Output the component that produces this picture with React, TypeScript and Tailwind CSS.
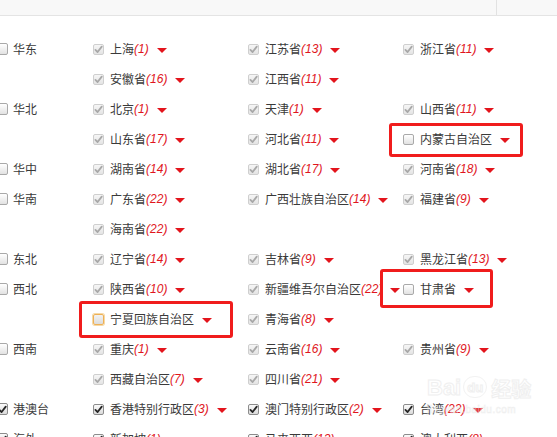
import React from "react";

type CbState = "disabled" | "checked" | "unchecked" | "focus";
type Cell = { t: string; n?: number; s?: CbState } | null;
type Row = { region?: string; rs?: CbState; cells: Cell[] };

const rows: Row[] = [
  { region: "华东", cells: [{ t: "上海", n: 1 }, { t: "江苏省", n: 13 }, { t: "浙江省", n: 11 }] },
  { cells: [{ t: "安徽省", n: 16 }, { t: "江西省", n: 11 }, null] },
  { region: "华北", cells: [{ t: "北京", n: 1 }, { t: "天津", n: 1 }, { t: "山西省", n: 11 }] },
  { cells: [{ t: "山东省", n: 17 }, { t: "河北省", n: 11 }, { t: "内蒙古自治区", s: "unchecked" }] },
  { region: "华中", cells: [{ t: "湖南省", n: 14 }, { t: "湖北省", n: 17 }, { t: "河南省", n: 18 }] },
  { region: "华南", cells: [{ t: "广东省", n: 22 }, { t: "广西壮族自治区", n: 14 }, { t: "福建省", n: 9 }] },
  { cells: [{ t: "海南省", n: 22 }, null, null] },
  { region: "东北", cells: [{ t: "辽宁省", n: 14 }, { t: "吉林省", n: 9 }, { t: "黑龙江省", n: 13 }] },
  { region: "西北", cells: [{ t: "陕西省", n: 10 }, { t: "新疆维吾尔自治区", n: 22 }, { t: "甘肃省", s: "unchecked" }] },
  { cells: [{ t: "宁夏回族自治区", s: "focus" }, { t: "青海省", n: 8 }, null] },
  { region: "西南", cells: [{ t: "重庆", n: 1 }, { t: "云南省", n: 16 }, { t: "贵州省", n: 9 }] },
  { cells: [{ t: "西藏自治区", n: 7 }, { t: "四川省", n: 21 }, null] },
  {
    region: "港澳台",
    rs: "checked",
    cells: [
      { t: "香港特别行政区", n: 3, s: "checked" },
      { t: "澳门特别行政区", n: 2, s: "checked" },
      { t: "台湾", n: 22, s: "checked" },
    ],
  },
  {
    region: "海外",
    rs: "checked",
    cells: [
      { t: "新加坡", n: 1, s: "checked" },
      { t: "马来西亚", n: 13, s: "checked" },
      { t: "澳大利亚", n: 8, s: "checked" },
    ],
  },
];

function Check({ color }: { color: string }) {
  return (
    <svg width="9" height="9" viewBox="0 0 10 10" className="block">
      <path d="M1.6 5.4 L4 7.8 L8.6 1.8" fill="none" stroke={color} strokeWidth="2" strokeLinecap="round" strokeLinejoin="round" />
    </svg>
  );
}

function Box({ s, region }: { s: CbState; region?: boolean }) {
  const size = region ? "w-[12px] h-[12px] ml-[-4px] mr-[5px]" : "w-[11px] h-[11px] mr-[6px]";
  if (s === "disabled")
    return (
      <span className={`${size} shrink-0 flex items-center justify-center rounded-[2px] border border-[#cfcfcf] bg-linear-to-b from-[#f6f6f6] to-[#e4e4e4]`}>
        <Check color="#a8a8a8" />
      </span>
    );
  if (s === "checked")
    return (
      <span className={`${size} shrink-0 flex items-center justify-center rounded-[2px] border border-[#8c8c8c] bg-linear-to-b from-[#fbfbfb] to-[#dadada]`}>
        <Check color="#262626" />
      </span>
    );
  if (s === "focus")
    return (
      <span className={`${size} shrink-0 rounded-[2px] border border-[#eeb055] shadow-[0_0_0_1px_#f6d9a6] bg-linear-to-b from-[#f2f2f2] to-[#dcdcdc]`} />
    );
  return (
    <span className={`${size} shrink-0 rounded-[2px] border border-[#a9a9a9] bg-linear-to-b from-[#ffffff] to-[#e2e2e2]`} />
  );
}

function Tri() {
  return (
    <span className="ml-[8px] mt-[2px] w-0 h-0 border-l-[5.5px] border-r-[5.5px] border-t-[5px] border-l-transparent border-r-transparent border-t-[#e3141c]" />
  );
}

function ProvCell({ c, w }: { c: Cell; w: string }) {
  return (
    <div className={`${w} shrink-0 flex items-center whitespace-nowrap`}>
      {c && (
        <>
          <Box s={c.s ?? "disabled"} />
          <span className="text-[#3a3a3a]">{c.t}</span>
          {c.n !== undefined && (
            <span className="text-[#e0161d] italic [font-family:'Liberation_Sans',Arial,sans-serif]">({c.n})</span>
          )}
          <Tri />
        </>
      )}
    </div>
  );
}

export default function App() {
  return (
    <div className="relative w-[557px] h-[437px] overflow-hidden bg-white text-[12px] [font-family:'Noto_Sans_CJK_SC','Noto_Sans',sans-serif]">
      <div className="h-[16px] bg-[#f8f8f8] border-b border-[#e4e4e4] flex">
        <div className="w-[497px] h-full border-r border-[#e2e2e2]" />
      </div>
      <div className="mt-[18px] flex flex-col">
        {rows.map((r, i) => (
          <div key={i} className="h-[30px] flex items-center">
            <div className="w-[93px] shrink-0 flex items-center whitespace-nowrap">
              {r.region && (
                <>
                  <Box s={r.rs ?? "unchecked"} region />
                  <span className="text-[#3a3a3a]">{r.region}</span>
                </>
              )}
            </div>
            <ProvCell c={r.cells[0]} w="w-[155px]" />
            <ProvCell c={r.cells[1]} w="w-[155px]" />
            <ProvCell c={r.cells[2]} w="w-[150px]" />
          </div>
        ))}
      </div>

      {/* annotation boxes */}
      <div className="absolute left-[389px] top-[123px] w-[134px] h-[34px] border-[3px] border-[#f01c1c] rounded-[3px]" />
      <div className="absolute left-[380px] top-[269px] w-[113px] h-[39px] border-[3px] border-[#f01c1c] rounded-[3px]" />
      <div className="absolute left-[79px] top-[301px] w-[154px] h-[37px] border-[3px] border-[#f01c1c] rounded-[3px]" />

      {/* watermark */}
      <div className="absolute left-[427px] top-[376px] flex flex-col items-start pointer-events-none text-white/0 opacity-60 [-webkit-text-stroke:1px_#e6e6e6]">
        <div className="flex items-end leading-none">
          <span className="text-[22px] font-bold [font-family:'Liberation_Sans',sans-serif]">Bai</span>
          <span className="ml-[2px] mb-[1px] w-[24px] h-[22px] rounded-full border border-[#ebebeb] flex items-center justify-center text-[13px] font-bold [font-family:'Liberation_Sans',sans-serif]">du</span>
          <span className="ml-[4px] text-[20px] font-bold">经验</span>
        </div>
        <span className="mt-[3px] text-[10px] [-webkit-text-stroke:0.6px_#e6e6e6] [font-family:'Liberation_Sans',sans-serif] tracking-[0.5px]">jingyan.baidu.com</span>
      </div>
    </div>
  );
}
